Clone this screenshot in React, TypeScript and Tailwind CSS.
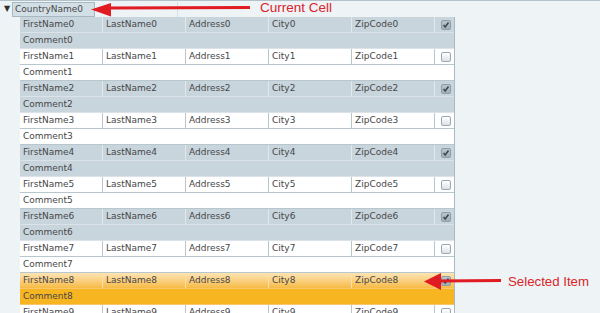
import React from 'react';

const FONT = { fontFamily: '"DejaVu Sans", Verdana, sans-serif' };

interface Item {
  index: number;
}

const COLS = ['FirstName', 'LastName', 'Address', 'City', 'ZipCode'];

function CheckBox({ checked }: { checked: boolean }) {
  if (checked) {
    return (
      <div className="flex h-[10px] w-[10px] items-center justify-center rounded-[2px] border border-[#8e9ca5] bg-gradient-to-b from-[#b9c5cc] to-[#a2b0b8]">
        <svg width="8" height="8" viewBox="0 0 8 8">
          <path d="M1.5 4 L3.2 6 L6.5 1.5" fill="none" stroke="#3d4a52" strokeWidth="1.6" />
        </svg>
      </div>
    );
  }
  return (
    <div className="h-[10px] w-[10px] rounded-[2px] border border-[#9aa7af] bg-gradient-to-b from-white to-[#dde3e7]" />
  );
}

function GridItem({ index }: Item) {
  const selected = index === 8;
  const gray = index % 2 === 0;

  let rowBg = 'bg-white';
  let commentBg = 'bg-white';
  let cellBorder = 'border-[#b8c6ce]';
  let rowBorder = 'border-[#b8c6ce]';
  if (gray) {
    rowBg = 'bg-[#c8d5dd]';
    commentBg = 'bg-[#c8d5dd]';
    cellBorder = 'border-[#e2e9ed]';
    rowBorder = 'border-[#dbe3e8]';
  }
  if (selected) {
    rowBg = 'bg-gradient-to-b from-[#fde4b2] to-[#f7bb42]';
    commentBg = 'bg-[#f8b522]';
    cellBorder = 'border-[#fbe0a8]';
    rowBorder = 'border-[#f6c66a]';
  }

  return (
    <div>
      <div className={`flex h-[16px] border-b ${rowBorder} ${rowBg}`}>
        {COLS.map((c) => (
          <div
            key={c}
            className={`flex w-[83px] shrink-0 items-center border-r ${cellBorder} pl-[3px] text-[9px] leading-none text-[#474747]`}
          >
            {c + index}
          </div>
        ))}
        <div className="flex flex-1 items-center justify-center pl-[2px]">
          <CheckBox checked={gray || selected} />
        </div>
      </div>
      <div
        className={`flex h-[16px] items-center border-b ${
          gray || selected ? rowBorder : 'border-[#b8c6ce]'
        } ${commentBg} pl-[3px] text-[9px] leading-none text-[#474747]`}
      >
        {'Comment' + index}
      </div>
    </div>
  );
}

export default function App() {
  const items = Array.from({ length: 10 }, (_, i) => i);
  return (
    <div className="relative h-[313px] w-[600px] overflow-hidden bg-[#eef3f6]" style={FONT}>
      {/* group header */}
      <div className="flex h-[17px] items-center border-t border-[#b3c1c9]">
        <span className="ml-[4px] w-[8px] text-[8px] leading-none text-[#2f2f2f]">▼</span>
        <div className="flex h-[15px] w-[83px] items-center border border-[#a7b8c3] bg-[#d3dfe6] pl-[2px] text-[9px] leading-none text-[#474747]">
          CountryName0
        </div>
        <div className="h-[15px] w-[83px] border-r border-[#d7e0e5]" />
      </div>

      {/* grid */}
      <div className="ml-[20px] w-[435px] border-r border-[#a9b8c1]">
        {items.map((i) => (
          <GridItem key={i} index={i} />
        ))}
      </div>

      {/* annotations */}
      <svg className="absolute left-0 top-0" width="600" height="313" viewBox="0 0 600 313">
        <path d="M108 8 L250 7.5" stroke="#e01b22" strokeWidth="3" fill="none" />
        <path d="M91 9.5 L111 3 L111 16.5 Z" fill="#e01b22" />
        <path d="M438 281 L501 280.5" stroke="#e01b22" strokeWidth="3" fill="none" />
        <path d="M424 281.5 L441 273 L441 290 Z" fill="#e01b22" />
      </svg>
      <div
        className="absolute left-[260px] top-[0px] text-[13.5px] leading-[16px] text-[#d9252b]"
        style={{ fontFamily: '"Liberation Sans", Arial, sans-serif' }}
      >
        Current Cell
      </div>
      <div
        className="absolute left-[508px] top-[274px] text-[13.25px] leading-[16px] text-[#d9252b]"
        style={{ fontFamily: '"Liberation Sans", Arial, sans-serif' }}
      >
        Selected Item
      </div>
    </div>
  );
}
